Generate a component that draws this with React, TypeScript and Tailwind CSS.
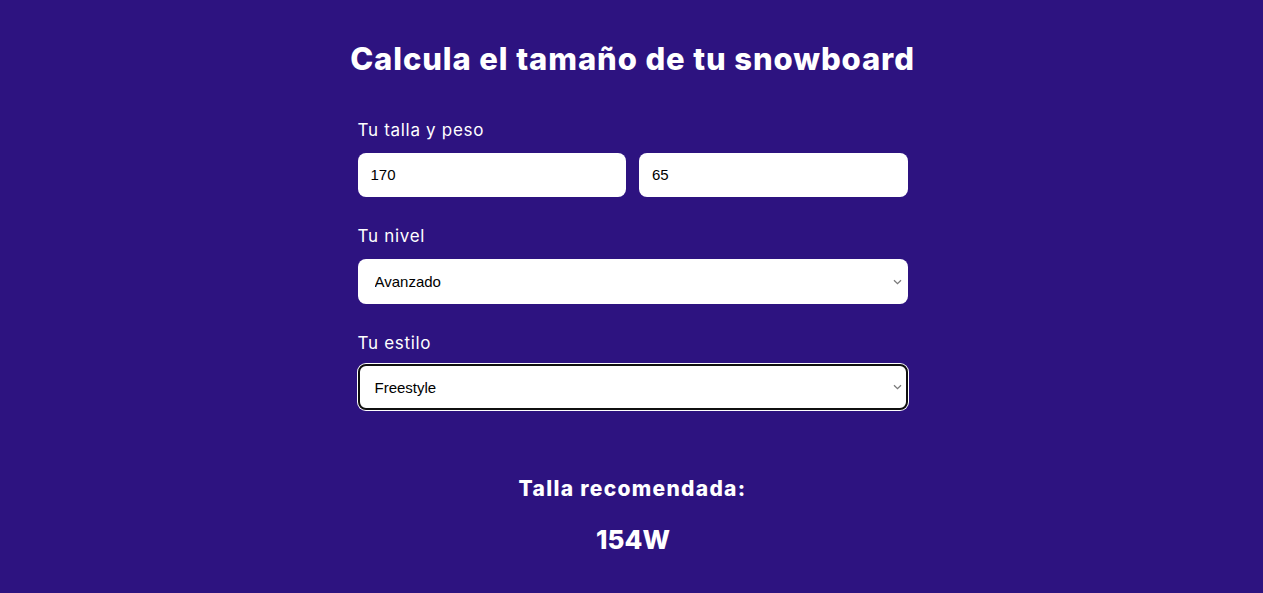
import React from "react";

const arial = { fontFamily: "'Liberation Sans', Arial, sans-serif" };

function Chevron() {
  return (
    <svg
      className="pointer-events-none absolute right-[6px] top-1/2 -translate-y-1/2"
      width="9"
      height="6"
      viewBox="0 0 9 6"
      fill="none"
    >
      <path d="M1 1.2 L4.5 4.6 L8 1.2" stroke="#7a7a7a" strokeWidth="1.3" />
    </svg>
  );
}

export default function App() {
  const poppins = { fontFamily: "Inter, 'Open Sans', sans-serif" };
  return (
    <div className="min-h-screen w-full bg-[#2d1380] flex flex-col items-center pt-[36px] text-white" style={poppins}>
      <h1 className="text-[31px] leading-[45px] font-extrabold tracking-[0.9px] ml-[2px]">Calcula el tamaño de tu snowboard</h1>
      <form className="w-[550px] ml-[2px] mt-[36px] flex flex-col" onSubmit={(e) => e.preventDefault()}>
        <label className="text-[17px] leading-[26px] tracking-[0.7px]">Tu talla y peso</label>
        <div className="mt-[10px] flex gap-[13px]">
          <input
            defaultValue="170"
            className="flex-1 min-w-0 h-[44px] rounded-lg bg-white px-[13px] pb-[1px] text-black text-[15px] outline-none"
            style={arial}
          />
          <input
            defaultValue="65"
            className="flex-1 min-w-0 h-[44px] rounded-lg bg-white px-[13px] pb-[1px] text-black text-[15px] outline-none"
            style={arial}
          />
        </div>
        <label className="mt-[26px] text-[17px] leading-[26px] tracking-[0.7px]">Tu nivel</label>
        <div className="relative mt-[10px]">
          <select
            defaultValue="Avanzado"
            className="appearance-none h-[45px] w-full rounded-lg bg-white pl-[17px] pr-[24px] pt-[2px] text-black text-[15px] outline-none"
            style={arial}
          >
            <option>Principiante</option>
            <option>Intermedio</option>
            <option>Avanzado</option>
          </select>
          <Chevron />
        </div>
        <label className="mt-[26px] text-[17px] leading-[26px] tracking-[0.7px]">Tu estilo</label>
        <div className="relative mt-[8px]">
          <select
            defaultValue="Freestyle"
            className="appearance-none h-[46px] w-full rounded-lg bg-white pl-[17px] pr-[24px] pt-[3px] text-black text-[15px] outline-2 outline-solid outline-[#101010] -outline-offset-2 shadow-[0_0_0_1px_white]"
            style={arial}
          >
            <option>Freestyle</option>
            <option>All mountain</option>
            <option>Freeride</option>
          </select>
          <Chevron />
        </div>
      </form>
      <h2 className="mt-[64px] text-[21px] leading-[30px] font-extrabold tracking-[1.3px] ml-[2px]">Talla recomendada:</h2>
      <p className="mt-[16px] text-[26px] leading-[40px] font-extrabold tracking-[0px] ml-[3px]">154W</p>
    </div>
  );
}
